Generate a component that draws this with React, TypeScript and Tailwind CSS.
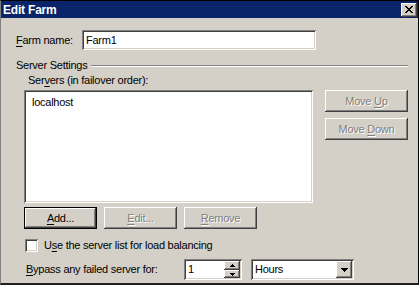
import React from 'react';

// ─── Win2000 bevels ───────────────────────────────────────────────────────────

const sunken = 'bg-white shadow-[inset_1px_1px_#808080,inset_-1px_-1px_#ffffff,inset_2px_2px_#404040,inset_-2px_-2px_#d4d0c8]';
const raised = 'bg-[#d4d0c8] shadow-[inset_-1px_-1px_#404040,inset_1px_1px_#ffffff,inset_-2px_-2px_#808080,inset_2px_2px_#d4d0c8]';

function Key({ children }: { children: React.ReactNode }) {
  return <span className="underline underline-offset-[2px]">{children}</span>;
}

function Button({ children, disabled, isDefault, className = '' }: { children: React.ReactNode; disabled?: boolean; isDefault?: boolean; className?: string }) {
  return (
    <div className={`h-[22px] flex items-center justify-center shrink-0 ${className} ${isDefault ? 'border border-black' : ''}`}>
      <div className={`w-full h-full flex items-center justify-center ${raised} ${disabled ? 'text-[#808080] [text-shadow:1px_1px_0_#ffffff]' : 'text-black'}`}>
        <span>{children}</span>
      </div>
    </div>
  );
}

function Arrow({ up, size = 'sm' }: { up?: boolean; size?: 'sm' | 'md' }) {
  const w = size === 'md' ? 7 : 5;
  const h = size === 'md' ? 4 : 3;
  return (
    <svg width={w} height={h} viewBox={`0 0 ${w} ${h}`} className="block">
      <polygon points={up ? `0,${h} ${w},${h} ${w / 2},0` : `0,0 ${w},0 ${w / 2},${h}`} fill="#000" shapeRendering="crispEdges" />
    </svg>
  );
}

// ─── Main ─────────────────────────────────────────────────────────────────────

export default function App() {
  return (
    <div className="w-[419px] h-[285px] bg-[#d4d0c8] border-t border-t-black border-r border-r-black border-b-2 border-b-[#202020] border-l border-l-[#808080] text-[11px] leading-none tracking-[-0.25px] text-black overflow-hidden"
      style={{ fontFamily: '"Liberation Sans", Arial, sans-serif' }}>
      {/* Title bar */}
      <div className="h-[17px] bg-[#0a246a] flex items-center justify-between pl-[2px] pr-[1px]">
        <span className="text-white font-bold text-[12px] tracking-[-0.2px]">Edit Farm</span>
        <div className={`w-[16px] h-[14px] flex items-center justify-center ${raised}`}>
          <svg width="8" height="7" viewBox="0 0 8 7" shapeRendering="crispEdges">
            <path d="M0 0h2v1h-2zM6 0h2v1h-2zM1 1h2v1h-2zM5 1h2v1h-2zM2 2h4v1h-4zM3 3h2v1h-2zM2 4h4v1h-4zM1 5h2v1h-2zM5 5h2v1h-2zM0 6h2v1h-2zM6 6h2v1h-2z" fill="#000" />
          </svg>
        </div>
      </div>

      <div className="pl-[15px] pr-[10px] pt-[12px]">
        {/* Farm name */}
        <div className="flex items-center h-[20px]">
          <span className="w-[66px]"><Key>F</Key>arm name:</span>
          <div className={`w-[234px] h-[20px] flex items-center pl-[4px] ${sunken}`}>Farm1</div>
        </div>

        {/* Server Settings group */}
        <div className="flex items-center mt-[9px] h-[12px]">
          <span className="pr-[4px]">Server Settings</span>
          <div className="flex-1 mt-[1px]">
            <div className="h-px bg-[#808080]" />
            <div className="h-px bg-white" />
          </div>
        </div>

        <div className="pl-[8px]">
          <div className="mt-[4px] pl-[4px] h-[12px]">Ser<Key>v</Key>ers (in failover order):</div>

          <div className="flex mt-[3px]">
            <div className={`w-[289px] h-[113px] pl-[8px] pt-[7px] ${sunken}`}>localhost</div>
            <div className="flex flex-col gap-[6px] ml-[12px]">
              <Button disabled className="w-[83px]">Move <Key>U</Key>p</Button>
              <Button disabled className="w-[83px]">Move <Key>D</Key>own</Button>
            </div>
          </div>

          {/* Add / Edit / Remove */}
          <div className="flex gap-[7px] mt-[4px]">
            <Button isDefault className="w-[73px]"><Key>A</Key>dd...</Button>
            <Button disabled className="w-[73px]"><Key>E</Key>dit...</Button>
            <Button disabled className="w-[73px]"><Key>R</Key>emove</Button>
          </div>

          {/* Checkbox */}
          <div className="flex items-center mt-[10px] h-[13px]">
            <div className={`w-[13px] h-[13px] ml-px ${sunken}`} />
            <span className="ml-[6px]">U<Key>s</Key>e the server list for load balancing</span>
          </div>

          {/* Bypass */}
          <div className="flex items-center mt-[7px] h-[21px]">
            <span className="w-[160px] pl-[2px]"><Key>B</Key>ypass any failed server for:</span>
            <div className={`w-[58px] h-[21px] flex items-center pl-[4px] pr-[2px] ${sunken}`}>
              <span className="flex-1">1</span>
              <div className="flex flex-col w-[16px] h-[17px]">
                <div className={`h-[9px] flex items-center justify-center ${raised}`}><Arrow up /></div>
                <div className={`h-[8px] flex items-center justify-center ${raised}`}><Arrow /></div>
              </div>
            </div>
            <div className={`w-[103px] h-[21px] ml-[9px] flex items-center pl-[4px] pr-[2px] ${sunken}`}>
              <span className="flex-1">Hours</span>
              <div className={`w-[16px] h-[17px] flex items-center justify-center ${raised}`}><Arrow size="md" /></div>
            </div>
          </div>
        </div>
      </div>
    </div>
  );
}
